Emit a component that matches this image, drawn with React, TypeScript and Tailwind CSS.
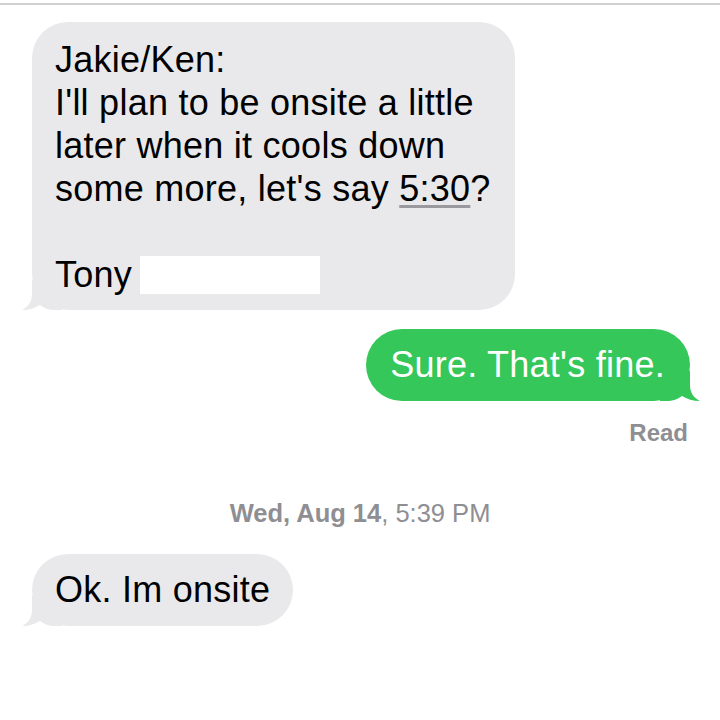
import React from 'react';

const font = { fontFamily: '"Liberation Sans", Arial, sans-serif' };

// Bubble tail, drawn for the left side; flipped for outgoing bubbles
function Tail({ color, side }: { color: string; side: 'left' | 'right' }) {
  return (
    <svg
      width="40"
      height="30"
      viewBox="0 0 40 30"
      className={
        side === 'left'
          ? 'absolute bottom-0 left-[-10px]'
          : 'absolute bottom-0 right-[-10px] scale-x-[-1]'
      }
    >
      <path
        d="M10 0 L10 14 C10 22 6 27 0 30 C7 30 13 28 18 25 C22 28 27 30 34 30 L40 30 L40 0 Z"
        fill={color}
      />
    </svg>
  );
}

function Incoming({ children, className }: { children: React.ReactNode; className?: string }) {
  return (
    <div className={'relative rounded-[36px] bg-[#e9e9eb] text-black ' + (className ?? '')}>
      <Tail color="#e9e9eb" side="left" />
      <div className="relative">{children}</div>
    </div>
  );
}

export default function App() {
  return (
    <div className="w-[720px] h-[720px] bg-white overflow-hidden" style={font}>
      <div className="mt-[3px] h-[2px] bg-[#d0d0d0]" />

      <div className="mt-[17px] ml-[32px] w-[483px]">
        <Incoming className="pt-[16px] pb-[14px] px-[23px] text-[36px] leading-[43px] tracking-[0.25px]">
          <div>Jakie/Ken:</div>
          <div>I'll plan to be onsite a little</div>
          <div>later when it cools down</div>
          <div>
            some more, let's say{' '}
            <span className="underline decoration-[#9a9a9e] decoration-[3px] underline-offset-[4px]">5:30</span>?
          </div>
          <div className="h-[43px]" />
          <div className="flex items-center">
            <span>Tony</span>
            <span className="ml-[8px] inline-block w-[180px] h-[38px] bg-white" />
          </div>
        </Incoming>
      </div>

      <div className="mt-[19px] flex justify-end pr-[30px]">
        <div className="relative rounded-[36px] bg-[#35c759] text-white">
          <Tail color="#35c759" side="right" />
          <div className="relative h-[72px] flex items-center pl-[24px] pr-[25px] text-[36px] tracking-[0.25px]">
            Sure. That's fine.
          </div>
        </div>
      </div>

      <div className="mt-[20px] pr-[32px] text-right text-[24px] leading-[24px] font-bold text-[#8e8e93]">
        Read
      </div>

      <div className="mt-[56px] text-center text-[25.5px] leading-[24px] text-[#8e8e93]">
        <span className="font-bold">Wed, Aug 14</span>, 5:39 PM
      </div>

      <div className="mt-[29px] ml-[32px] flex">
        <Incoming className="h-[72px] flex items-center px-[23px] text-[36px] tracking-[0.25px]">
          Ok. Im onsite
        </Incoming>
      </div>
    </div>
  );
}
